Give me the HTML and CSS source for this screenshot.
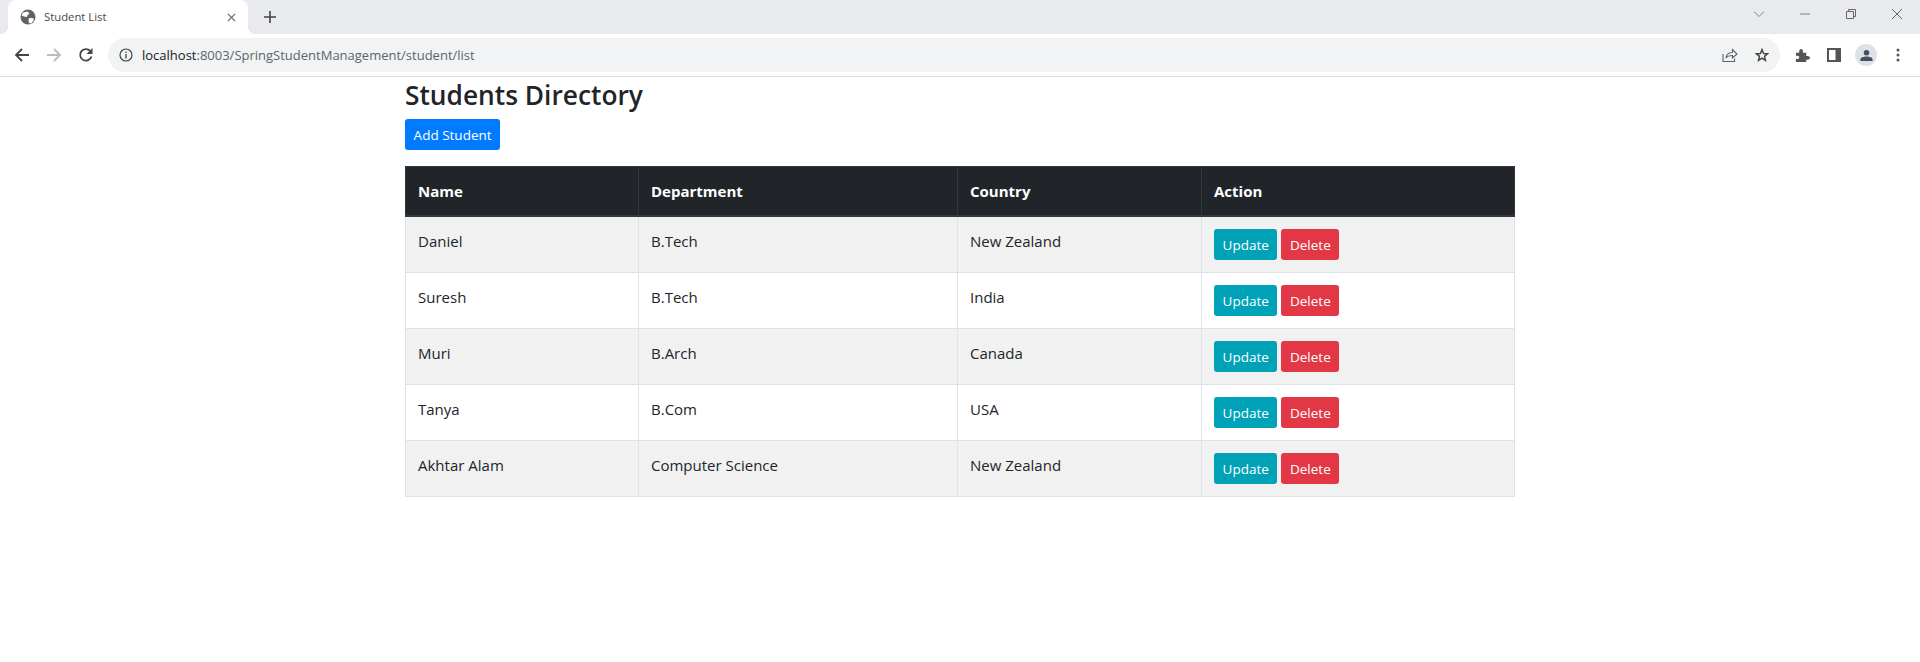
FILE: index.html
```html
<!DOCTYPE html>
<html lang="en">
<head>
    <meta charset="UTF-8">
    <meta name="viewport" content="width=device-width, initial-scale=1.0">
    <title>Student List</title>
    <link rel="stylesheet" href="styles.css">
</head>
<body>
    <header class="browser">
        <div class="tabstrip">
            <div class="tab">
                <svg class="favicon" viewBox="0 0 16 16"><circle cx="8" cy="8" r="7.5" fill="#5f6368"/><path d="M3 3.500 7.500 2.500 9.500 4.500 7.500 6 7 8 4 7.500 1.500 6.500ZM9 9 13 9 14 11 11 14.500 9 14 8.500 11.500Z" fill="#fff"/></svg>
                <span class="tab-title">Student List</span>
                <svg class="tab-close" viewBox="0 0 10 10"><path d="M1 1 9 9M9 1 1 9" stroke="#5f6368" stroke-width="1.300"/></svg>
            </div>
            <svg class="new-tab" viewBox="0 0 12 12"><path d="M6 0V12M0 6H12" stroke="#444" stroke-width="1.600"/></svg>
            <div class="window-controls">
                <svg class="win-icon" viewBox="0 0 10 10"><path d="M0 2.500 5 7.500 10 2.500" fill="none" stroke="#80868b"/></svg>
                <svg class="win-icon" viewBox="0 0 10 10"><path d="M0 5H10" stroke="#80868b"/></svg>
                <svg class="win-icon" viewBox="0 0 10 10"><path d="M.5 2.500H7.500V9.500H.5ZM2.500 2.500V.5H9.500V7.500H7.500" fill="none" stroke="#666"/></svg>
                <svg class="win-icon" viewBox="0 0 10 10"><path d="M0 0 10 10M10 0 0 10" stroke="#666"/></svg>
            </div>
        </div>
        <div class="toolbar">
            <svg class="nav-icon" viewBox="0 0 16 16"><path d="M15 8H2M8 2 2 8 8 14" fill="none" stroke="#444" stroke-width="1.800"/></svg>
            <svg class="nav-icon" viewBox="0 0 16 16"><path d="M1 8H14M8 2 14 8 8 14" fill="none" stroke="#bbb" stroke-width="1.800"/></svg>
            <svg class="nav-icon" viewBox="0 0 16 16"><path d="M13.500 9.500A5.800 5.800 0 1 1 12.200 3.900" fill="none" stroke="#444" stroke-width="1.800"/><path d="M14.500 1V7H8.500Z" fill="#444"/></svg>
            <div class="omnibox">
                <svg class="info-icon" viewBox="0 0 14 14"><circle cx="7" cy="7" r="6" fill="none" stroke="#444" stroke-width="1.200"/><path d="M7 6V10.500M7 3.500V5" stroke="#444" stroke-width="1.300"/></svg>
                <span class="url"><span class="url-host">localhost</span>:8003/SpringStudentManagement/student/list</span>
                <svg class="omni-icon" viewBox="0 0 16 16"><path d="M1 7V14.500H12.500V11.500M4 11C4.500 7.500 7 5.500 10.500 5.500V2.500L15 7 10.500 11V8.500C8 8.500 5.500 9 4 11Z" fill="none" stroke="#5f6368" stroke-width="1.100"/></svg>
                <svg class="omni-icon star" viewBox="0 0 16 16"><path d="M8 1.800 9.800 6.200 14.500 6.500 10.900 9.500 12 14.200 8 11.700 4 14.200 5.100 9.500 1.500 6.500 6.200 6.200Z" fill="none" stroke="#444" stroke-width="1.700"/></svg>
            </div>
            <div class="toolbar-actions">
                <svg class="puzzle" viewBox="0 0 16 16"><path d="M1 5H4.500C4 2 5.500 1 6.500 1S9 2 8.500 5H12V8.500C15 8 16 9.500 16 10.500S15 13 12 12.500V15H1V11.500C3.500 12 4.500 11 4.500 10S3.500 8 1 8.500Z" fill="#555"/></svg>
                <svg class="side-panel" viewBox="0 0 14 14"><path d="M0 0H14V14H0ZM2 2V12H8.500V2Z" fill="#555" fill-rule="evenodd"/></svg>
                <div class="avatar"><svg viewBox="0 0 14 14"><circle cx="7" cy="4" r="3" fill="#444f60"/><path d="M0.500 13V11C0.500 9 4 8 7 8S13.500 9 13.500 11V13Z" fill="#444f60"/></svg></div>
                <svg class="kebab" viewBox="0 0 4 14"><circle cx="2" cy="2" r="1.500" fill="#555"/><circle cx="2" cy="7" r="1.500" fill="#555"/><circle cx="2" cy="12" r="1.500" fill="#555"/></svg>
            </div>
        </div>
    </header>

    <main class="container">
        <h3>Students Directory</h3>
        <a class="btn btn-primary add-btn" href="#">Add Student</a>
        <table class="students">
            <thead>
                <tr>
                    <th class="col-name">Name</th>
                    <th class="col-dept">Department</th>
                    <th class="col-country">Country</th>
                    <th>Action</th>
                </tr>
            </thead>
            <tbody>
                <tr>
                    <td>Daniel</td>
                    <td>B.Tech</td>
                    <td>New Zealand</td>
                    <td><a class="btn btn-info" href="#">Update</a> <a class="btn btn-danger" href="#">Delete</a></td>
                </tr>
                <tr>
                    <td>Suresh</td>
                    <td>B.Tech</td>
                    <td>India</td>
                    <td><a class="btn btn-info" href="#">Update</a> <a class="btn btn-danger" href="#">Delete</a></td>
                </tr>
                <tr>
                    <td>Muri</td>
                    <td>B.Arch</td>
                    <td>Canada</td>
                    <td><a class="btn btn-info" href="#">Update</a> <a class="btn btn-danger" href="#">Delete</a></td>
                </tr>
                <tr>
                    <td>Tanya</td>
                    <td>B.Com</td>
                    <td>USA</td>
                    <td><a class="btn btn-info" href="#">Update</a> <a class="btn btn-danger" href="#">Delete</a></td>
                </tr>
                <tr>
                    <td>Akhtar Alam</td>
                    <td>Computer Science</td>
                    <td>New Zealand</td>
                    <td><a class="btn btn-info" href="#">Update</a> <a class="btn btn-danger" href="#">Delete</a></td>
                </tr>
            </tbody>
        </table>
    </main>
</body>
</html>
```

FILE: styles.css
```css
* {
    box-sizing: border-box;
}
body {
    margin: 0;
    font-family: "Open Sans", "Noto Sans", Arial, sans-serif;
    font-size: 15px;
    line-height: 24px;
    color: #212529;
    background: #fff;
}

/* browser chrome */
.browser {
    height: 77px;
    border-bottom: 1px solid #dadce0;
}
.tabstrip {
    display: flex;
    align-items: center;
    height: 34px;
    background: #e8eaed;
}
.tab {
    position: relative;
    display: flex;
    align-items: center;
    width: 240px;
    height: 34px;
    margin-left: 8px;
    padding: 0 12px;
    background: #fff;
    border-radius: 8px 8px 0 0;
}
.tab::before,
.tab::after {
    content: "";
    position: absolute;
    bottom: 0;
    width: 8px;
    height: 8px;
}
.tab::before {
    left: -8px;
    background: radial-gradient(circle at 0 0, #e8eaed 8px, #fff 8.5px);
}
.tab::after {
    right: -8px;
    background: radial-gradient(circle at 100% 0, #e8eaed 8px, #fff 8.5px);
}
.favicon {
    width: 16px;
    height: 16px;
}
.tab-title {
    flex: 1;
    margin-left: 8px;
    font-size: 11.300px;
    color: #45494d;
}
.tab-close {
    width: 9px;
    height: 9px;
}
.new-tab {
    width: 12px;
    height: 12px;
    margin-left: 16px;
}
.window-controls {
    display: flex;
    align-items: center;
    gap: 36px;
    margin-left: auto;
    padding: 0 18px 6px 0;
}
.win-icon {
    width: 10px;
    height: 10px;
}

.toolbar {
    display: flex;
    align-items: center;
    height: 42px;
    padding-left: 14px;
    background: #fff;
}
.nav-icon {
    width: 16px;
    height: 16px;
}
.nav-icon + .nav-icon {
    margin-left: 16px;
}
.omnibox {
    display: flex;
    align-items: center;
    width: 1672px;
    height: 34px;
    margin-left: 14px;
    padding: 0 11px;
    background: #f1f3f4;
    border-radius: 17px;
}
.info-icon {
    width: 14px;
    height: 14px;
}
.url {
    flex: 1;
    margin-left: 9px;
    font-size: 13px;
    color: #5f6368;
}
.url-host {
    color: #202124;
}
.omni-icon {
    width: 16px;
    height: 16px;
}
.omni-icon.star {
    width: 14px;
    height: 14px;
    margin-left: 17px;
}
.toolbar-actions {
    display: flex;
    align-items: center;
    margin-left: 15px;
}
.puzzle {
    width: 15px;
    height: 15px;
}
.side-panel {
    width: 14px;
    height: 14px;
    margin-left: 17px;
}
.avatar {
    display: flex;
    align-items: center;
    justify-content: center;
    width: 22px;
    height: 22px;
    margin-left: 14px;
    background: #dee1e6;
    border-radius: 50%;
}
.avatar svg {
    width: 13px;
    height: 13px;
}
.kebab {
    width: 4px;
    height: 14px;
    margin-left: 19px;
}

/* page */
.container {
    width: 1110px;
    margin: 0 auto;
}
h3 {
    margin: 0 0 7px;
    padding-top: 1px;
    font-size: 26.300px;
    font-weight: 600;
    line-height: 34px;
}
.btn {
    display: inline-block;
    padding: 4px 8.600px 2px;
    font-size: 13.500px;
    line-height: 25px;
    color: #fff;
    text-decoration: none;
    border-radius: 3px;
}
.btn-primary {
    background: #007bff;
}
.btn-info {
    background: #00a2b8;
}
.btn-danger {
    background: #e23745;
}
.add-btn {
    vertical-align: top;
}
.students {
    width: 100%;
    margin-top: 16px;
    table-layout: fixed;
    border-collapse: collapse;
}
.students th,
.students td {
    padding: 12px;
    border: 1px solid #dee2e6;
    text-align: left;
    vertical-align: top;
}
.students th {
    font-weight: 700;
    color: #fff;
    background: #212529;
    border-color: #32383e;
    border-bottom-width: 2px;
}
.students tbody tr:nth-child(odd) {
    background: #f1f1f1;
}
.col-name {
    width: 233px;
}
.col-dept {
    width: 319px;
}
.col-country {
    width: 244px;
}
```
